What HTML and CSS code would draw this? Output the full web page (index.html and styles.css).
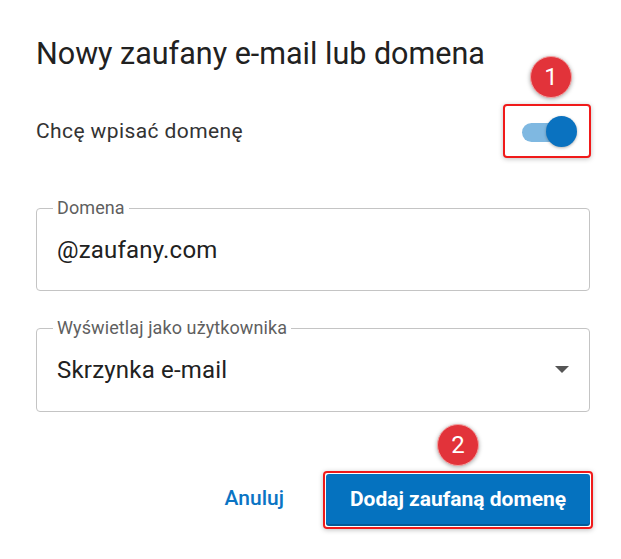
FILE: index.html
```html
<!DOCTYPE html>
<html lang="pl">
<head>
<meta charset="utf-8">
<title>Nowy zaufany e-mail lub domena</title>
<link rel="stylesheet" href="styles.css">
</head>
<body>
<div class="dialog">
  <h1 class="title">Nowy zaufany e-mail lub domena</h1>
  <div class="switch-row">
    <span class="switch-label">Chcę wpisać domenę</span>
    <div class="switch-wrap">
      <span class="badge badge-1">1</span>
      <div class="highlight switch-box">
        <span class="track"></span>
        <span class="thumb"></span>
      </div>
    </div>
  </div>
  <fieldset class="field field-first">
    <legend>Domena</legend>
    <div class="value">@zaufany.com</div>
  </fieldset>
  <fieldset class="field select">
    <legend>Wyświetlaj jako użytkownika</legend>
    <div class="value">Skrzynka e-mail</div>
    <span class="arrow"></span>
  </fieldset>
  <div class="actions">
    <button class="btn-text">Anuluj</button>
    <div class="primary-wrap">
      <span class="badge badge-2">2</span>
      <div class="highlight btn-box">
        <button class="btn-primary">Dodaj zaufaną domenę</button>
      </div>
    </div>
  </div>
</div>
</body>
</html>
```
FILE: styles.css
```css
* { box-sizing: border-box; }
html, body { margin: 0; padding: 0; background: #fff; }
body { font-family: Roboto, "Noto Sans", sans-serif; color: #212121; }
.dialog { width: 621px; height: 559px; padding: 36px 31px 0 36px; }
.title { margin: 0; font-size: 30.5px; font-weight: 400; line-height: 36px; color: #212121; }
.switch-row { display: flex; justify-content: space-between; align-items: center; margin-top: 32px; height: 54px; }
.switch-label { font-size: 21px; color: #333; letter-spacing: 0.4px; }
.switch-wrap { position: relative; margin-right: -1px; }
.highlight { border: 2px solid #f01a1a; border-radius: 4px; box-shadow: 0 1px 5px rgba(0,0,0,0.25); }
.switch-box { width: 88px; height: 54px; position: relative; background: #fff; }
.track { position: absolute; left: 17px; top: 17px; width: 40px; height: 19px; border-radius: 10px; background: #7fb8e1; }
.thumb { position: absolute; left: 41px; top: 10px; width: 31px; height: 31px; border-radius: 50%; background: #0a72c0; box-shadow: 0 1px 3px rgba(0,0,0,0.3); }
.badge { position: absolute; width: 42px; height: 42px; border-radius: 50%; background: #e2333a; color: #fff; font-size: 24px; font-weight: 400; display: flex; align-items: center; justify-content: center; box-shadow: 0 1px 4px rgba(0,0,0,0.35); border: 1px solid #f5a0a0; }
.badge-1 { left: 27px; top: -48px; }
.badge-2 { left: 114px; top: -47px; }
.field { margin: 0; border: 1px solid #c4c4c4; border-radius: 4px; width: 554px; padding: 18px 20px 26px; position: relative; }
.field legend { font-size: 18px; color: #5f5f5f; padding: 0 4px; margin-left: -4px; line-height: 20px; letter-spacing: 0.1px; }
.field .value { font-size: 24px; line-height: 28px; color: #212121; letter-spacing: 0.2px; }
.field-first { margin-top: 40px; }
.select { margin-top: 27px; padding-bottom: 27px; }
.arrow { position: absolute; right: 20px; top: 28px; width: 0; height: 0; border-left: 7px solid transparent; border-right: 7px solid transparent; border-top: 7px solid #555; }
.actions { display: flex; justify-content: flex-end; align-items: center; margin-top: 59px; gap: 39px; }
.btn-text { border: 0; background: none; font-family: inherit; font-size: 21px; font-weight: 500; color: #0a74c4; padding: 0; margin-top: -5px; }
.primary-wrap { position: relative; margin-right: -3px; }
.btn-box { width: 270px; height: 58px; padding: 1px; }
.btn-primary { width: 100%; height: 100%; border: 0; border-radius: 3px; background: #0572bf; color: #fff; font-family: inherit; font-size: 21px; font-weight: 700; box-shadow: inset 0 -2px 0 rgba(0,0,0,0.2); padding-bottom: 4px; }
```
